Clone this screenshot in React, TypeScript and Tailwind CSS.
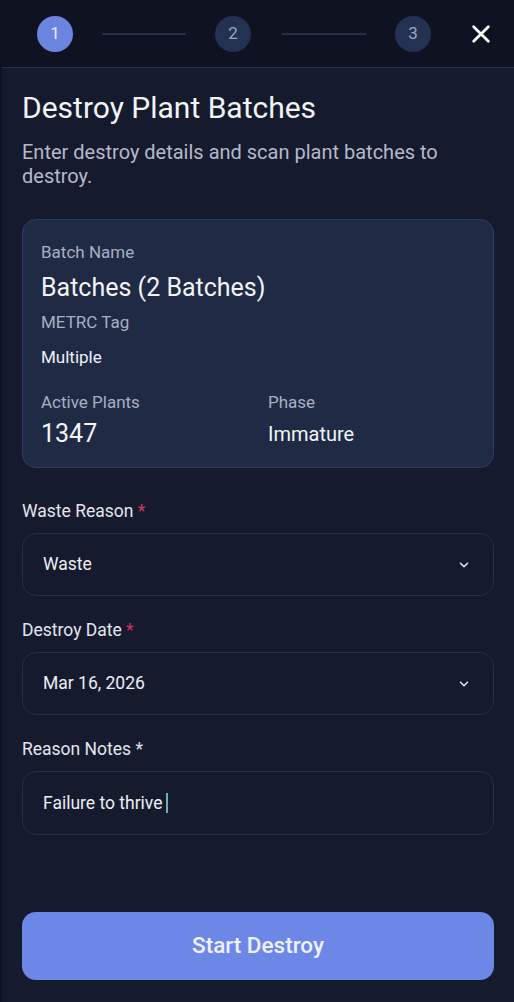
import React from 'react'

const ChevronDown: React.FC = () => (
  <svg width="14" height="14" viewBox="0 0 24 24" fill="none" stroke="#e5e7ef" strokeWidth="2.6" strokeLinecap="round" strokeLinejoin="round">
    <path d="M6 9l6 6 6-6" />
  </svg>
)

const CloseIcon: React.FC = () => (
  <svg width="22" height="22" viewBox="0 0 24 24" fill="none" stroke="#ffffff" strokeWidth="3" strokeLinecap="round">
    <path d="M4 4l16 16M20 4L4 20" />
  </svg>
)

const Step: React.FC<{ n: number; active?: boolean }> = ({ n, active }) => (
  <div
    className={
      active
        ? 'w-[36px] h-[36px] rounded-full bg-[#6b84e0] text-[#e8ecff] flex items-center justify-center text-[17px]'
        : 'w-[36px] h-[36px] rounded-full bg-[#233152] text-[#9ba6c0] flex items-center justify-center text-[17px]'
    }
  >
    {n}
  </div>
)

const SelectField: React.FC<{ label: string; value: string }> = ({ label, value }) => (
  <div className="w-full">
    <div className="text-[17.5px] text-[#e4e6ee] leading-[22px] mb-[11px]">
      {label} <span className="text-[#d8325c]">*</span>
    </div>
    <div className="h-[63px] rounded-[14px] border border-[#262e4b] flex items-center justify-between pl-[20px] pr-[22px]">
      <span className="text-[17.5px] text-[#eceef4]">{value}</span>
      <ChevronDown />
    </div>
  </div>
)

const App: React.FC = () => {
  return (
    <div className="w-[514px] h-[1002px] bg-[#0f1321] flex flex-col font-['Roboto',sans-serif]">
      <div className="h-[67px] flex items-center pl-[37px] pr-[22px]">
        <Step n={1} active />
        <div className="w-[84px] h-[2px] bg-[#283247] mx-[29px]" />
        <Step n={2} />
        <div className="w-[84px] h-[2px] bg-[#283247] ml-[31px] mr-[29px]" />
        <Step n={3} />
        <div className="ml-auto flex items-center">
          <CloseIcon />
        </div>
      </div>
      <div className="flex-1 ml-[2px] bg-[#161a2d] border-t border-[#2b3058] px-[20px] pt-[22px] flex flex-col">
        <h1 className="text-[30px] text-[#f2f3f7] leading-[36px]">Destroy Plant Batches</h1>
        <p className="text-[20px] text-[#b5b9c9] leading-[24px] mt-[14px]">
          Enter destroy details and scan plant batches to destroy.
        </p>
        <div className="mt-[31px] rounded-[14px] border border-[#2f3d64] bg-[#1f2a45] px-[18px] pt-[22px] pb-[18px]">
          <div className="text-[17px] text-[#a9b0c2] leading-[20px]">Batch Name</div>
          <div className="text-[25px] text-[#f3f4f8] leading-[30px] mt-[11px]">Batches (2 Batches)</div>
          <div className="text-[17px] text-[#a9b0c2] leading-[20px] mt-[9px]">METRC Tag</div>
          <div className="text-[17px] text-[#eef0f5] leading-[20px] mt-[15px]">Multiple</div>
          <div className="grid grid-cols-2 mt-[25px]">
            <div>
              <div className="text-[17px] text-[#a9b0c2] leading-[20px]">Active Plants</div>
              <div className="text-[25px] text-[#f3f4f8] leading-[30px] mt-[7px]">1347</div>
            </div>
            <div className="pl-[10px]">
              <div className="text-[17px] text-[#a9b0c2] leading-[20px]">Phase</div>
              <div className="text-[20px] text-[#f3f4f8] leading-[30px] mt-[7px]">Immature</div>
            </div>
          </div>
        </div>
        <div className="mt-[32px] flex flex-col gap-[23px]">
          <SelectField label="Waste Reason" value="Waste" />
          <SelectField label="Destroy Date" value="Mar 16, 2026" />
          <div className="w-full">
            <div className="text-[17.5px] text-[#e4e6ee] leading-[22px] mb-[11px]">Reason Notes *</div>
            <div className="h-[64px] rounded-[14px] border border-[#262e4b] flex items-center pl-[20px] pr-[22px]">
              <span className="text-[17.5px] text-[#eceef4]">Failure to thrive</span>
              <span className="ml-[3px] w-[2px] h-[20px] bg-[#6fb3ae]" />
            </div>
          </div>
        </div>
        <div className="mt-[77px] h-[68px] rounded-[14px] bg-[#6d87e6] flex items-center justify-center">
          <span className="text-[22.5px] font-medium text-[#eef1ff]">Start Destroy</span>
        </div>
      </div>
    </div>
  )
}

export default App
